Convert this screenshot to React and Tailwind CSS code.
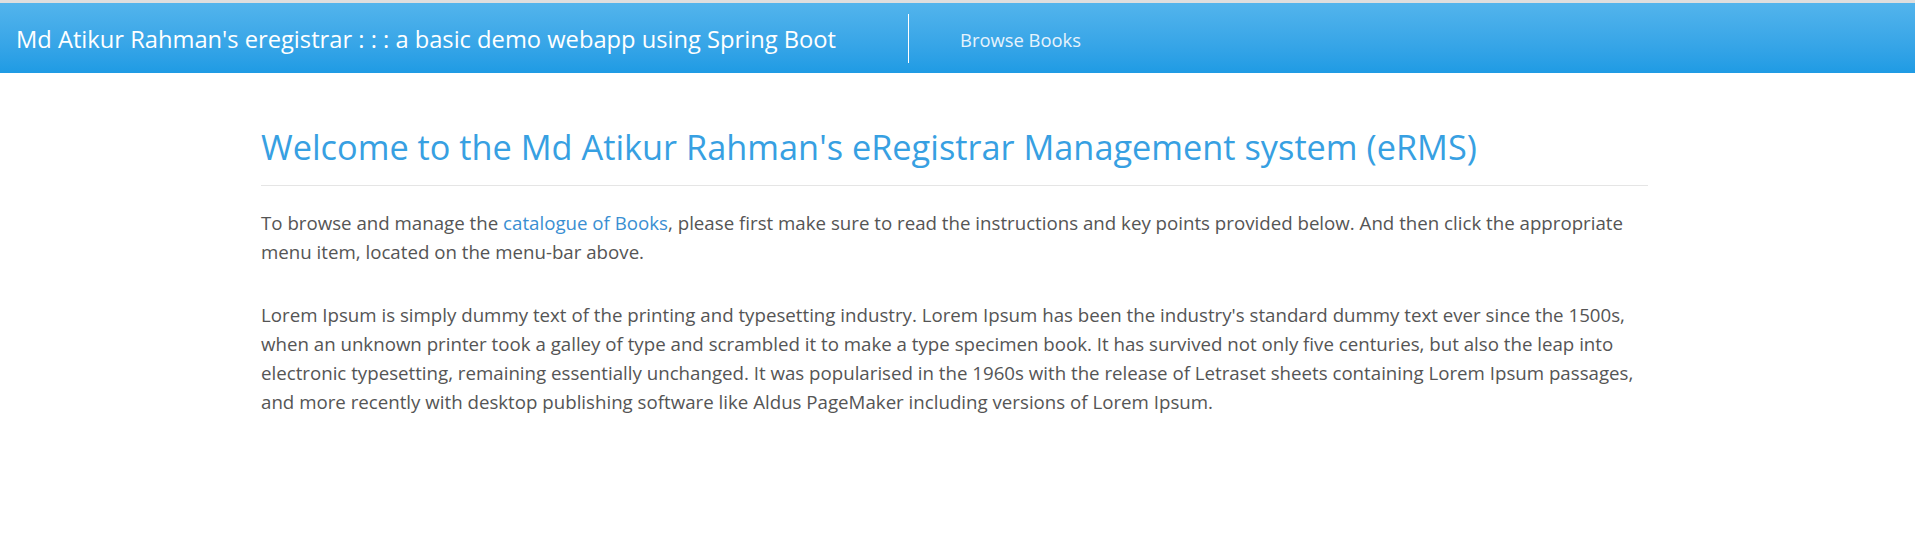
export default function App() {
  return (
    <div className="min-h-[557px] bg-white" style={{ fontFamily: '"Open Sans", "Noto Sans", sans-serif' }}>
      <div className="h-[3px] bg-[#dedede]" />
      <nav className="h-[70px] bg-gradient-to-b from-[#52b4ec] to-[#1e9be4] flex items-center">
        <a href="#" className="pl-[16px] pt-[4px] w-[908px] text-[23.7px] text-white whitespace-nowrap">
          Md Atikur Rahman's eregistrar : : : a basic demo webapp using Spring Boot
        </a>
        <div className="w-px h-[49px] bg-white self-start mt-[11px]" />
        <a href="#" className="ml-[51px] pt-[4px] text-[18.4px] text-[#e6f3fc]">Browse Books</a>
      </nav>
      <main className="w-[1387px] ml-[261px] pt-[56px]">
        <h1 className="text-[34.3px] leading-[35px] font-medium text-[#37a0e2] pb-[21px] border-b border-[#e5e5e5]">
          Welcome to the Md Atikur Rahman's eRegistrar Management system (eRMS)
        </h1>
        <p className="mt-[22px] text-[18.7px] leading-[29.3px] text-[#555]">
          To browse and manage the <a href="#" className="text-[#3a8fd2]">catalogue of Books</a>, please first make sure to read the instructions and key points provided below. And then click the appropriate menu item, located on the menu-bar above.
        </p>
        <p className="mt-[33px] text-[18.7px] leading-[29.3px] text-[#555]">
          Lorem Ipsum is simply dummy text of the printing and typesetting industry. Lorem Ipsum has been the industry's standard dummy text ever since the 1500s, when an unknown printer took a galley of type and scrambled it to make a type specimen book. It has survived not only five centuries, but also the leap into electronic typesetting, remaining essentially unchanged. It was popularised in the 1960s with the release of Letraset sheets containing Lorem Ipsum passages, and more recently with desktop publishing software like Aldus PageMaker including versions of Lorem Ipsum.
        </p>
      </main>
    </div>
  );
}
